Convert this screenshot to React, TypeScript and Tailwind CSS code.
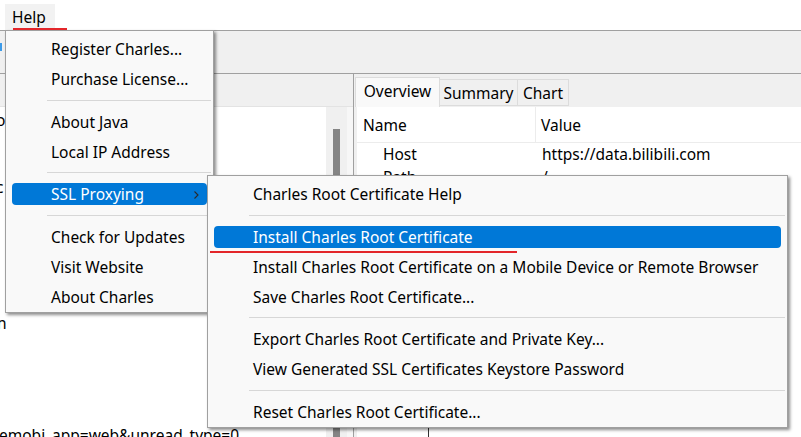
import React from "react";

type Entry = { kind: "item"; label: string; active?: boolean; arrow?: boolean } | { kind: "sep"; h: number; pt: number };

function Menu({ entries, className }: { entries: Entry[]; className: string }) {
  return (
    <div className={className}>
      {entries.map((e, i) =>
        e.kind === "sep" ? (
          <div key={i} style={{ height: e.h, paddingTop: e.pt }} className="box-border">
            <div className="h-px bg-[#d7d7d7] ml-[41px] mr-[2px]" />
          </div>
        ) : (
          <div key={i} className="h-[30px] px-[6px] py-[4px] box-border">
            <div
              className={`relative h-[22px] rounded-[4px] flex items-center pl-[39px] pt-[2px] box-border whitespace-nowrap ${
                e.active ? "bg-[#0078d7] text-white" : "text-black"
              }`}
            >
              {e.label}
              {e.arrow && (
                <svg className="absolute right-[8px] top-[8px]" width="5" height="8" viewBox="0 0 5 8">
                  <polyline points="0.5,0.5 4,4 0.5,7.5" fill="none" stroke="#2a2a2a" strokeWidth="1.1" />
                </svg>
              )}
            </div>
          </div>
        )
      )}
    </div>
  );
}

export default function App() {
  const helpEntries: Entry[] = [
    { kind: "item", label: "Register Charles..." },
    { kind: "item", label: "Purchase License..." },
    { kind: "sep", h: 13, pt: 6 },
    { kind: "item", label: "About Java" },
    { kind: "item", label: "Local IP Address" },
    { kind: "sep", h: 12, pt: 5 },
    { kind: "item", label: "SSL Proxying", active: true, arrow: true },
    { kind: "sep", h: 13, pt: 6 },
    { kind: "item", label: "Check for Updates" },
    { kind: "item", label: "Visit Website" },
    { kind: "item", label: "About Charles" },
  ];
  const subEntries: Entry[] = [
    { kind: "item", label: "Charles Root Certificate Help" },
    { kind: "sep", h: 13, pt: 6 },
    { kind: "item", label: "Install Charles Root Certificate", active: true },
    { kind: "item", label: "Install Charles Root Certificate on a Mobile Device or Remote Browser" },
    { kind: "item", label: "Save Charles Root Certificate..." },
    { kind: "sep", h: 12, pt: 5 },
    { kind: "item", label: "Export Charles Root Certificate and Private Key..." },
    { kind: "item", label: "View Generated SSL Certificates Keystore Password" },
    { kind: "sep", h: 13, pt: 6 },
    { kind: "item", label: "Reset Charles Root Certificate..." },
  ];

  return (
    <div className="relative w-[801px] h-[437px] overflow-hidden bg-white text-black font-['Noto_Sans',sans-serif] text-[15.5px] leading-none">
      {/* menubar */}
      <div className="h-[31px] bg-white border-b border-[#a0a0a0] flex items-end pl-[5px] box-border">
        <div className="h-[26px] w-[50px] bg-[#f2f2f2] flex items-center pl-[7px] pt-[2px] box-border">Help</div>
      </div>
      {/* toolbar */}
      <div className="h-[43px] bg-[#f0f0f0] border-b border-[#a0a0a0] box-border relative">
        <div className="pt-[12px]">
          <div className="w-[2px] h-[8px] bg-[#3d9be9]" />
        </div>
      </div>
      {/* panels */}
      <div className="flex h-[363px]">
        {/* left panel */}
        <div className="w-[354px] flex flex-col border-r border-[#a0a0a0] box-border">
          <div className="h-[33px] bg-[#f0f0f0] border-b border-[#e3e3e3] box-border" />
          <div className="flex-1 flex min-h-0">
            <div className="flex-1 bg-white overflow-hidden">
              <div className="pt-[2px] leading-[22px] whitespace-nowrap">
                <div className="h-[22px] -ml-[4px]">o</div>
                <div className="h-[22px] mt-[45px] -ml-[4px]">c</div>
                <div className="h-[22px] mt-[114px] -ml-[3px]">n</div>
                <div className="h-[22px] mt-[90px] -ml-[1px]">emobi_app=web&amp;unread_type=0</div>
              </div>
            </div>
            <div className="w-[21px] bg-[#f0f0f0] pt-[22px] pl-[7px]">
              <div className="w-[7px] h-full bg-[#858585]" />
            </div>
            <div className="w-[6px] bg-[#f7f7f7]" />
          </div>
        </div>
        {/* right panel */}
        <div className="flex-1 flex flex-col bg-[#f0f0f0]">
          <div className="h-[33px] flex items-end pl-[1px]">
            <div className="w-[85px] h-[30px] bg-[#f9f9f9] border border-b-0 border-[#dcdcdc] flex items-center justify-center box-border pb-[1px]">Overview</div>
            <div className="w-[78px] h-[27px] bg-[#f0f0f0] border border-l-0 border-[#dcdcdc] flex items-center justify-center box-border mb-[1px] pt-[3px]">Summary</div>
            <div className="w-[51px] h-[27px] bg-[#f0f0f0] border border-l-0 border-[#dcdcdc] flex items-center justify-center box-border mb-[1px] pt-[3px]">Chart</div>
          </div>
          <div className="flex-1 ml-[3px] bg-white flex flex-col">
            <div className="h-[36px] flex border-b border-[#ececec] box-border">
              <div className="w-[179px] border-r border-[#ececec] flex items-center pl-[6px] pt-[3px] box-border">Name</div>
              <div className="flex items-center pl-[5px] pt-[3px] box-border">Value</div>
            </div>
            <div className="h-[23px] flex items-center">
              <div className="w-[180px] pl-[26px]">Host</div>
              <div className="pl-[5px]">https://data.bilibili.com</div>
            </div>
            <div className="h-[23px] flex items-center">
              <div className="w-[180px] pl-[26px]">Path</div>
              <div className="pl-[5px]">/</div>
            </div>
            <div className="flex-1 flex items-end pl-[71px]">
              <div className="w-px h-[9px] bg-[#333]" />
            </div>
          </div>
        </div>
      </div>

      {/* Help dropdown */}
      <Menu
        entries={helpEntries}
        className="absolute left-[5px] top-[30px] w-[209px] bg-[#f9f9f9] border border-[#a0a0a0] pt-[3px] pb-[0px] shadow-[2px_2px_3px_rgba(0,0,0,0.45)]"
      />
      {/* SSL Proxying submenu */}
      <Menu
        entries={subEntries}
        className="absolute left-[207px] top-[175px] w-[581px] bg-[#f9f9f9] border border-[#a0a0a0] pt-[3px] shadow-[2px_2px_3px_rgba(0,0,0,0.45)]"
      />

      {/* red annotation underlines */}
      <div className="absolute left-[13px] top-[28px] w-[54px] h-[2px] bg-[#e3262a]" />
      <div className="absolute left-[210px] top-[251px] w-[307px] h-[2px] bg-[#e3262a]" />
    </div>
  );
}
